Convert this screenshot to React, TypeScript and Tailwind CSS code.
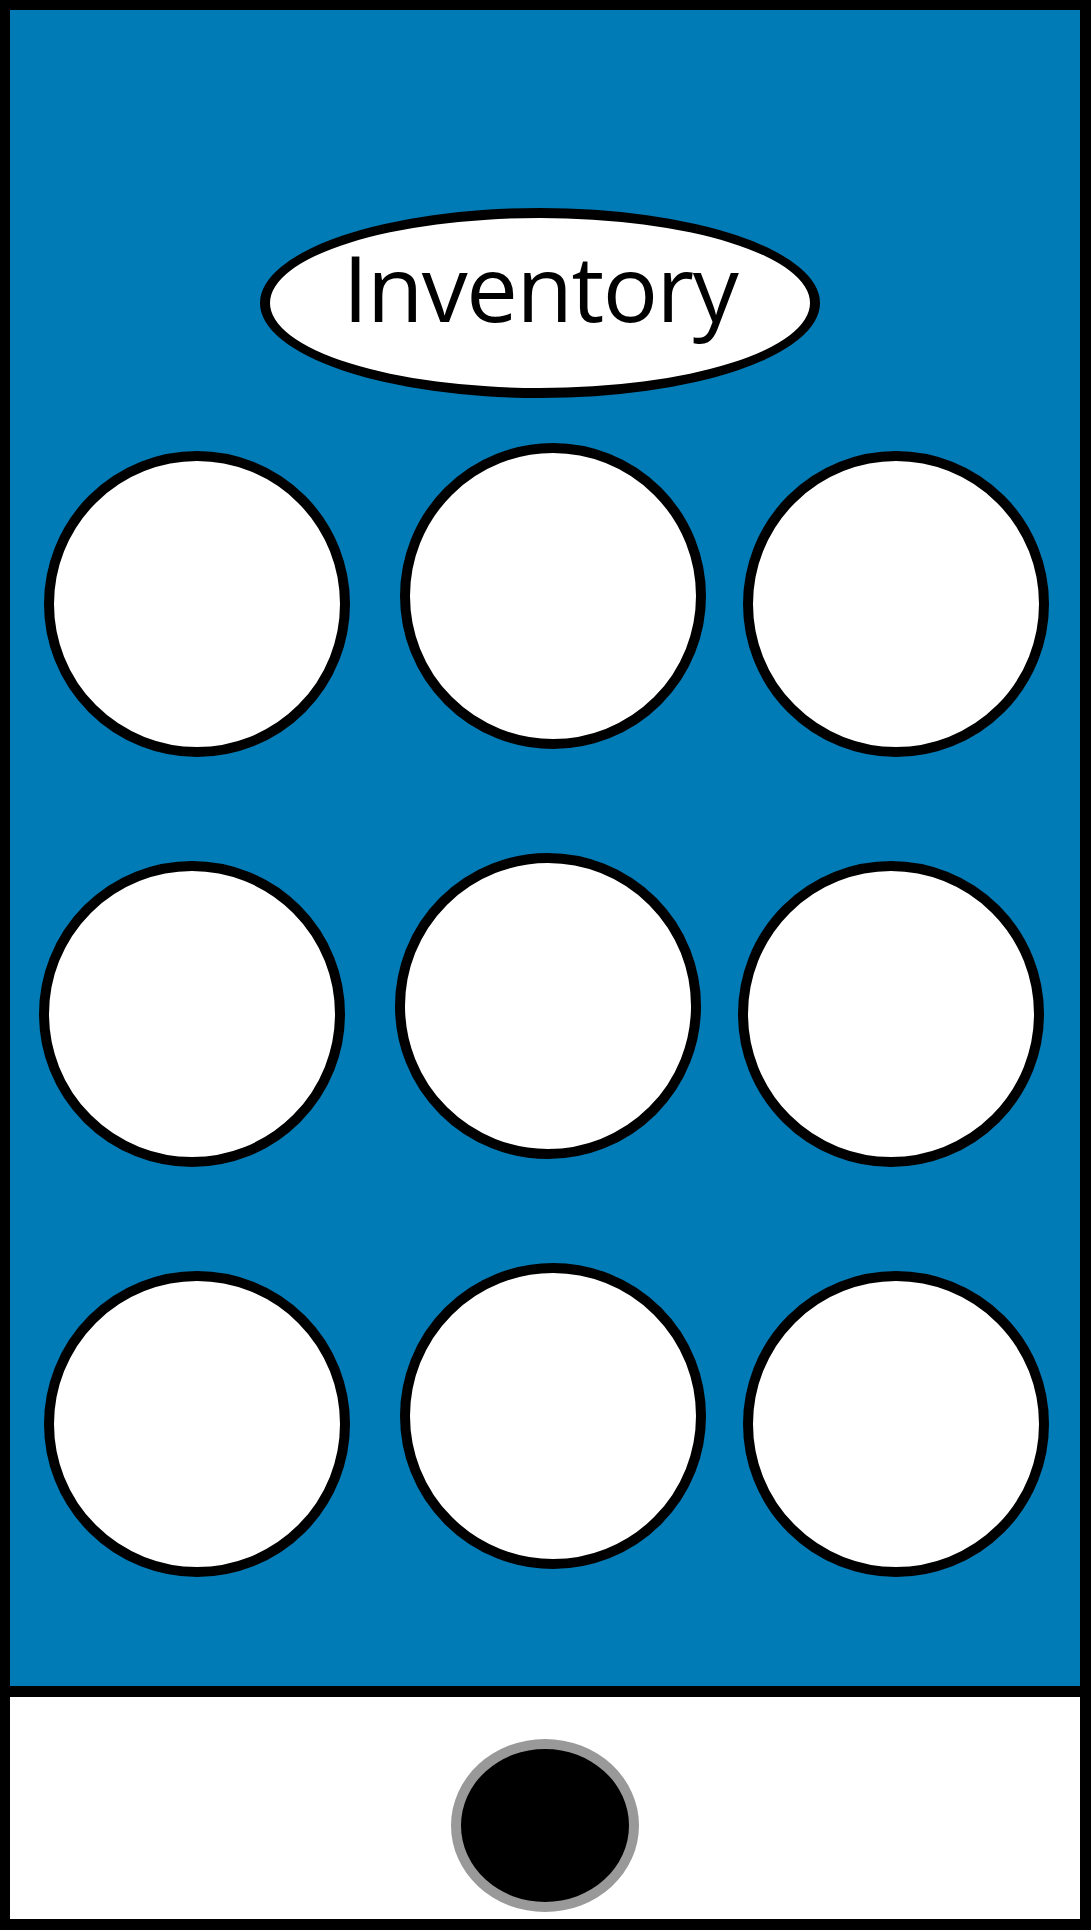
import React from 'react';

const Slot = ({ raised = false, className = '' }: { raised?: boolean; className?: string }) => (
  <div
    className={`w-[306px] h-[306px] shrink-0 rounded-full bg-white border-[10px] border-black ${
      raised ? '' : 'mt-2'
    } ${className}`}
  />
);

const App = () => {
  // row offsets: the middle row sits a few pixels further left
  const rows = [
    { pad: 'pl-[34px]' },
    { pad: 'pl-[29px]' },
    { pad: 'pl-[34px]' },
  ];

  return (
    <div className="w-[1091px] h-[1930px] bg-black border-t-[10px] border-l-[10px] border-r-[11px] border-b-[11px] border-black flex flex-col">
      {/* Inventory panel */}
      <div className="h-[1676px] bg-[#007bb6] flex flex-col pt-[198px]">
        <div className="ml-[250px] w-[560px] h-[190px] rounded-[50%] bg-white border-[10px] border-black flex justify-center items-start pt-[23px]">
          <span className="font-['Open_Sans',sans-serif] text-[92px] leading-none tracking-[-1.5px] text-black">
            Inventory
          </span>
        </div>

        <div className="flex flex-col gap-[96px] mt-[45px]">
          {rows.map((row, index) => (
            <div key={index} className={`flex items-start ${row.pad}`}>
              <Slot />
              <Slot raised className="ml-[50px]" />
              <Slot className="ml-[37px]" />
            </div>
          ))}
        </div>
      </div>

      {/* Home bar */}
      <div className="h-[233px] bg-white border-t-[11px] border-black pt-[42px]">
        <div className="mx-auto w-[188px] h-[173px] rounded-[50%] bg-black border-[10px] border-[#999999]" />
      </div>
    </div>
  );
};

export default App;
